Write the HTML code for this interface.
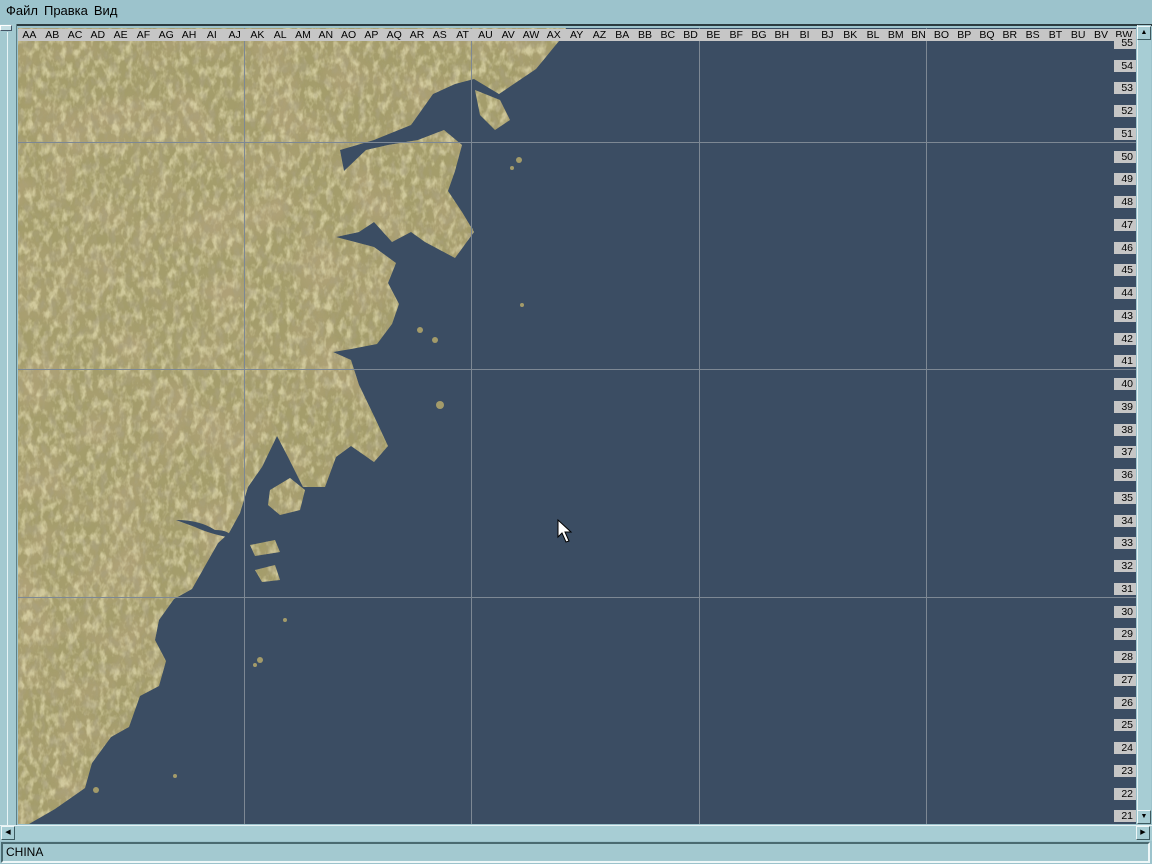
<!DOCTYPE html>
<html><head><meta charset="utf-8"><style>
*{margin:0;padding:0;box-sizing:border-box}
body{width:1152px;height:864px;background:#9cc3cc;position:relative;overflow:hidden;font-family:"Liberation Sans",sans-serif}
.menu{position:absolute;left:0;top:0;height:24px;width:1152px;font-size:13px;line-height:22px;padding-left:6px;color:#000}
.menu span{margin-right:6px}
#map{position:absolute;left:18px;top:28px;width:1118px;height:796px;background:#3b4d63;overflow:hidden}
.hdr{position:absolute;left:18px;top:29px;width:1118px;height:12px;background:#c6c6c6;font-size:10.5px;line-height:12px;color:#000}
.hdr span{position:absolute;top:0;width:22.8px;text-align:center}
.rl{position:absolute;left:1114px;width:22px;height:12px;background:#c6c6c6;font-size:10.5px;line-height:12px;text-align:right;padding-right:3px}
.vs{position:absolute;left:1137px;top:25px;width:14px;height:799px;background:#a7cdd4;border-left:1px solid #e6f2f4}
.btn{position:absolute;width:14px;height:14px;background:#a7cdd4;border:1px solid;border-color:#eef7f8 #3c5a60 #3c5a60 #eef7f8;font-size:7px;line-height:12px;text-align:center;color:#000}
.hs{position:absolute;left:0;top:825px;width:1152px;height:16px;background:#a7cdd4;border-top:1px solid #e6f2f4}
.status{position:absolute;left:1px;top:842px;width:1149px;height:21px;border:2px solid;border-color:#4a6a70 #eef7f8 #eef7f8 #4a6a70;font-size:12px;line-height:17px;padding-left:3px;background:#a3c9d0}
.ls{position:absolute;left:0;top:24px;width:17px;height:801px;background:#a3c9d0;border-right:1px solid #5e7f86}
</style></head><body>
<div class="menu"><span>Файл</span><span>Правка</span><span>Вид</span></div>
<div style="position:absolute;left:0;top:24px;width:1152px;height:2px;background:#2c3c40"></div>
<div class="ls"><div style="position:absolute;left:7px;top:8px;width:1px;height:793px;background:#e8f4f6"></div><div style="position:absolute;left:0;top:1px;width:12px;height:6px;border:1px solid;border-color:#fff #456 #456 #fff;background:#c5dfe4"></div></div>
<div id="map">
<svg width="1118" height="796" viewBox="18 28 1118 796" style="position:absolute;left:0;top:0">
<defs>
<filter id="dk" x="0" y="0" width="100%" height="100%">
<feTurbulence type="fractalNoise" baseFrequency="0.02" numOctaves="3" seed="5"/>
<feColorMatrix type="matrix" values="0 0 0 0 0.48  0 0 0 0 0.38  0 0 0 0 0.22  2.5 0 0 0 -1.0"/>
</filter>
<filter id="fn" x="0" y="0" width="100%" height="100%">
<feTurbulence type="fractalNoise" baseFrequency="0.15 0.09" numOctaves="3" seed="2"/>
<feColorMatrix type="matrix" values="0 0 0 0 0.85  0 0 0 0 0.8  0 0 0 0 0.5  3 0 0 0 -1.3"/>
</filter>
<filter id="fd" x="0" y="0" width="100%" height="100%">
<feTurbulence type="fractalNoise" baseFrequency="0.12 0.08" numOctaves="3" seed="9"/>
<feColorMatrix type="matrix" values="0 0 0 0 0.4  0 0 0 0 0.36  0 0 0 0 0.22  3 0 0 0 -1.4"/>
</filter>
<clipPath id="land"><path d="M18,28 L566,28 L559,41 L536,69 L499,94 L474,79 L455,84 L433,94 L411,125 L374,140 L340,150 L344,171 L366,150 L388,145 L418,140 L444,130 L462,145 L455,171 L448,191 L462,212 L474,232 L455,258 L425,242 L411,232 L392,242 L374,222 L359,232 L336,237 L374,247 L396,263 L388,283 L399,304 L392,324 L377,344 L351,349 L333,352 L351,360 L359,385 L374,416 L388,446 L374,462 L351,446 L336,457 L325,487 L303,487 L288,457 L277,436 L262,467 L248,487 L240,513 L229,533 L218,543 L192,589 L174,599 L159,620 L155,640 L166,661 L159,686 L140,696 L129,727 L111,737 L92,763 L85,788 L55,809 L29,824 L18,824 Z M270,490 L290,478 L305,490 L300,510 L280,515 L268,505 Z M475,90 L500,100 L510,120 L495,130 L480,115 Z M250,545 L275,540 L280,552 L255,556 Z M255,570 L275,565 L280,580 L262,582 Z"/></clipPath>
</defs>
<g clip-path="url(#land)">
<rect x="18" y="28" width="600" height="800" fill="#a49d6b"/>
<rect x="18" y="28" width="600" height="800" filter="url(#dk)" opacity="0.55"/>
<rect x="18" y="28" width="600" height="800" filter="url(#fn)" opacity="0.6"/>
<rect x="18" y="28" width="600" height="800" filter="url(#fd)" opacity="0.6"/>
</g>
<path d="M176,520 Q200,520 215,530 Q230,530 232,538 Q210,534 195,527 Z" fill="#3b4d63"/>
<g fill="#a39b6a">
<circle cx="519" cy="160" r="3"/><circle cx="512" cy="168" r="2"/><circle cx="522" cy="305" r="2"/>
<circle cx="440" cy="405" r="4"/><circle cx="435" cy="340" r="3"/><circle cx="420" cy="330" r="3"/>
<circle cx="260" cy="660" r="3"/><circle cx="255" cy="665" r="2"/><circle cx="285" cy="620" r="2"/>
<circle cx="96" cy="790" r="3"/><circle cx="175" cy="776" r="2"/><circle cx="470" cy="230" r="3"/>
</g>
<g stroke="#7d8894" stroke-width="1">
<line x1="244.5" y1="28" x2="244.5" y2="824"/><line x1="471.5" y1="28" x2="471.5" y2="824"/>
<line x1="699.5" y1="28" x2="699.5" y2="824"/><line x1="926.5" y1="28" x2="926.5" y2="824"/>
<line x1="18" y1="142.5" x2="1136" y2="142.5"/><line x1="18" y1="369.5" x2="1136" y2="369.5"/>
<line x1="18" y1="597.5" x2="1136" y2="597.5"/>
</g>
<path d="M558,520 L558,537 L562,533 L566,542 L569,541 L565,532 L571,532 Z" fill="#fff" stroke="#000" stroke-width="1"/>
</svg>
</div>
<div class="hdr">
<span style="left:0px">AA</span><span style="left:22.8px">AB</span><span style="left:45.6px">AC</span><span style="left:68.4px">AD</span><span style="left:91.2px">AE</span><span style="left:114px">AF</span><span style="left:136.8px">AG</span><span style="left:159.6px">AH</span><span style="left:182.4px">AI</span><span style="left:205.2px">AJ</span><span style="left:228px">AK</span><span style="left:250.8px">AL</span><span style="left:273.6px">AM</span><span style="left:296.4px">AN</span><span style="left:319.2px">AO</span><span style="left:342px">AP</span><span style="left:364.8px">AQ</span><span style="left:387.6px">AR</span><span style="left:410.4px">AS</span><span style="left:433.2px">AT</span><span style="left:456px">AU</span><span style="left:478.8px">AV</span><span style="left:501.6px">AW</span><span style="left:524.4px">AX</span><span style="left:547.2px">AY</span><span style="left:570px">AZ</span><span style="left:592.8px">BA</span><span style="left:615.6px">BB</span><span style="left:638.4px">BC</span><span style="left:661.2px">BD</span><span style="left:684px">BE</span><span style="left:706.8px">BF</span><span style="left:729.6px">BG</span><span style="left:752.4px">BH</span><span style="left:775.2px">BI</span><span style="left:798px">BJ</span><span style="left:820.8px">BK</span><span style="left:843.6px">BL</span><span style="left:866.4px">BM</span><span style="left:889.2px">BN</span><span style="left:912px">BO</span><span style="left:934.8px">BP</span><span style="left:957.6px">BQ</span><span style="left:980.4px">BR</span><span style="left:1003.2px">BS</span><span style="left:1026px">BT</span><span style="left:1048.8px">BU</span><span style="left:1071.6px">BV</span><span style="left:1094.4px">BW</span>
</div>
<div class="rl" style="top:37px">55</div><div class="rl" style="top:60px">54</div><div class="rl" style="top:82px">53</div><div class="rl" style="top:105px">52</div><div class="rl" style="top:128px">51</div><div class="rl" style="top:151px">50</div><div class="rl" style="top:173px">49</div><div class="rl" style="top:196px">48</div><div class="rl" style="top:219px">47</div><div class="rl" style="top:242px">46</div><div class="rl" style="top:264px">45</div><div class="rl" style="top:287px">44</div><div class="rl" style="top:310px">43</div><div class="rl" style="top:333px">42</div><div class="rl" style="top:355px">41</div><div class="rl" style="top:378px">40</div><div class="rl" style="top:401px">39</div><div class="rl" style="top:424px">38</div><div class="rl" style="top:446px">37</div><div class="rl" style="top:469px">36</div><div class="rl" style="top:492px">35</div><div class="rl" style="top:515px">34</div><div class="rl" style="top:537px">33</div><div class="rl" style="top:560px">32</div><div class="rl" style="top:583px">31</div><div class="rl" style="top:606px">30</div><div class="rl" style="top:628px">29</div><div class="rl" style="top:651px">28</div><div class="rl" style="top:674px">27</div><div class="rl" style="top:697px">26</div><div class="rl" style="top:719px">25</div><div class="rl" style="top:742px">24</div><div class="rl" style="top:765px">23</div><div class="rl" style="top:788px">22</div><div class="rl" style="top:810px">21</div>
<div class="vs"></div>
<div class="btn" style="left:1137px;top:26px">▲</div>
<div class="btn" style="left:1137px;top:810px">▼</div>
<div class="hs"></div>
<div class="btn" style="left:1px;top:826px">◀</div>
<div class="btn" style="left:1136px;top:826px">▶</div>
<div class="status">CHINA</div>
</body></html>
